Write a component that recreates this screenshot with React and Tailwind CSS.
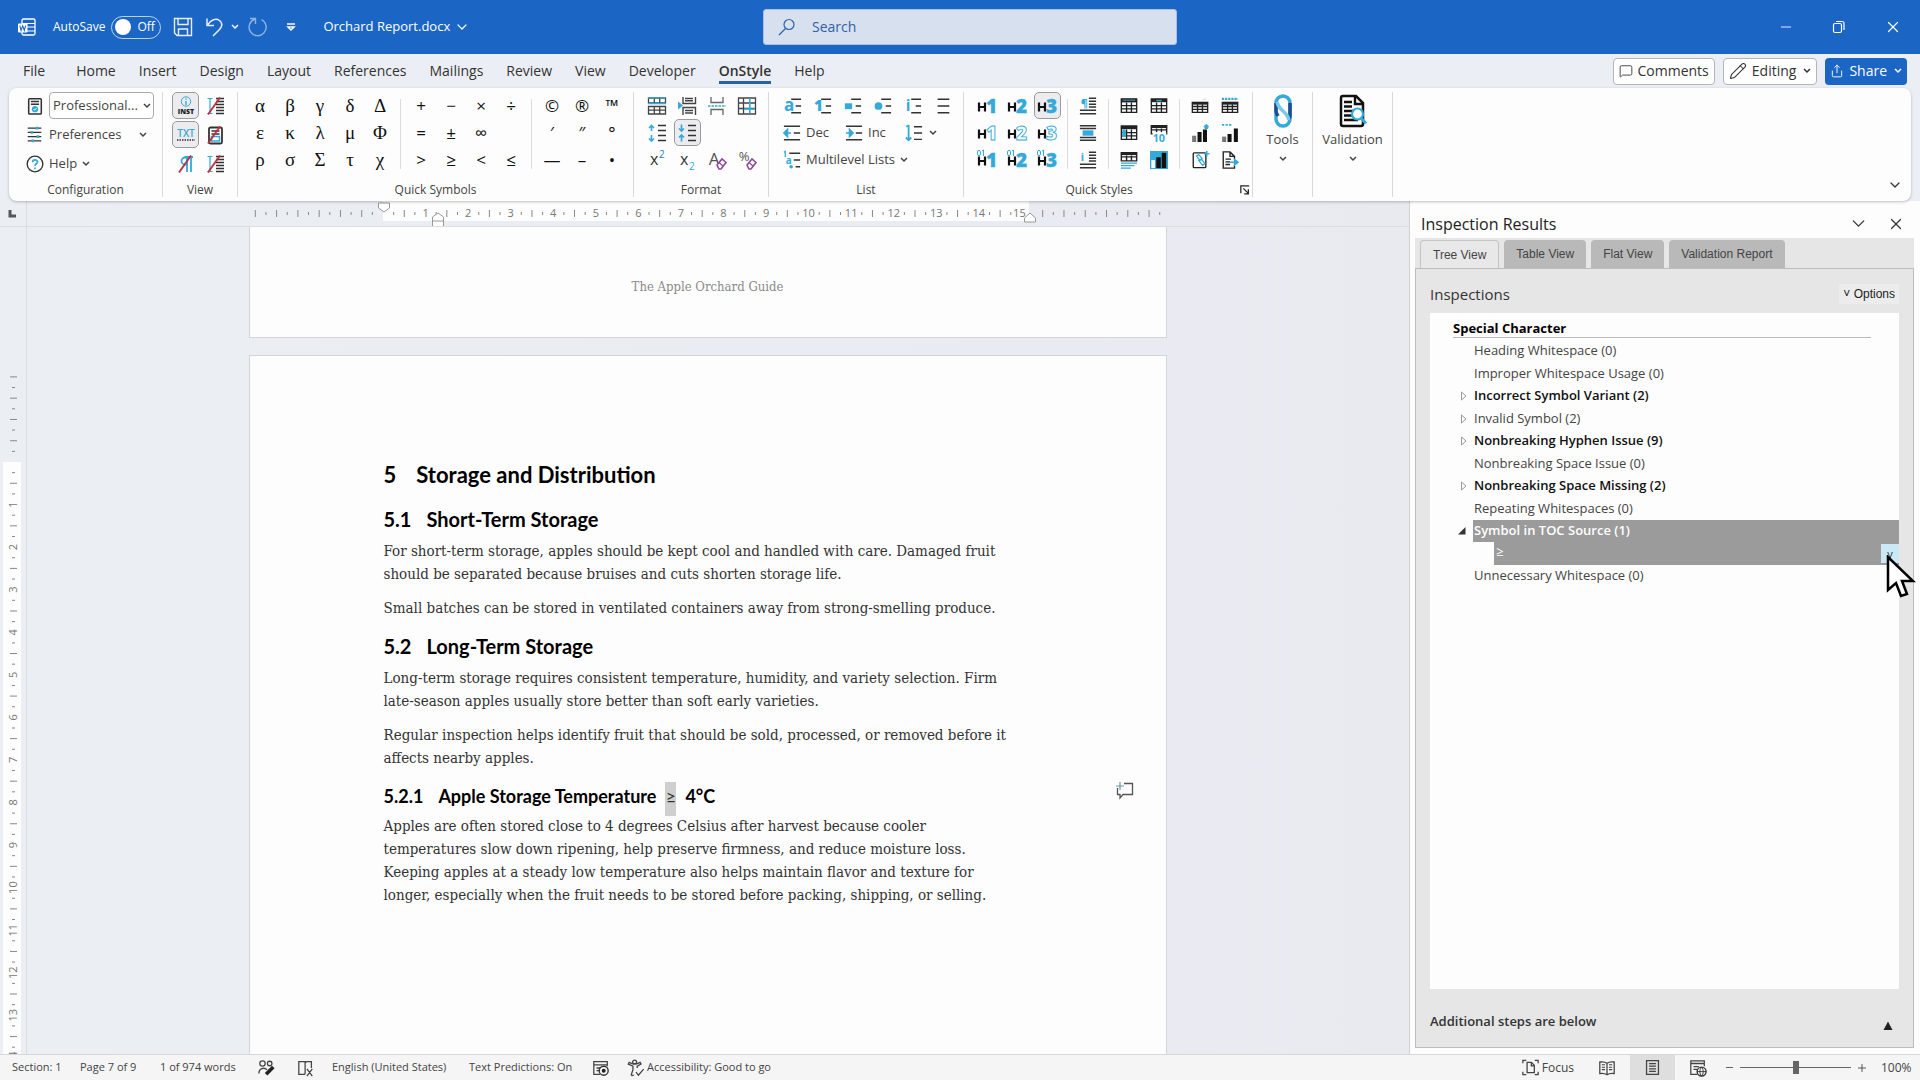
import {
  Search, ChevronDown, Minus, Plus, X, Copy, MessageSquare, Pencil, Share, Accessibility,
} from 'lucide-react';

const BLUE = '#35a9d8';
const INK = '#333';

const tabs = ['File', 'Home', 'Insert', 'Design', 'Layout', 'References', 'Mailings', 'Review', 'View', 'Developer', 'OnStyle', 'Help'];

const greek = ['α', 'β', 'γ', 'δ', 'Δ', 'ε', 'κ', 'λ', 'μ', 'Φ', 'ρ', 'σ', 'Σ', 'τ', 'χ'];
const operators = ['+', '−', '×', '÷', '=', '±', '∞', '', '>', '≥', '<', '≤'];
const marks = ['©', '®', '™', '′', '″', '°', '—', '–', '•'];

const inspections = [
  { label: 'Heading Whitespace (0)' },
  { label: 'Improper Whitespace Usage (0)' },
  { label: 'Incorrect Symbol Variant (2)', bold: true, closed: true },
  { label: 'Invalid Symbol (2)', closed: true },
  { label: 'Nonbreaking Hyphen Issue (9)', bold: true, closed: true },
  { label: 'Nonbreaking Space Issue (0)' },
  { label: 'Nonbreaking Space Missing (2)', bold: true, closed: true },
  { label: 'Repeating Whitespaces (0)' },
];

function Glyph({ children, size = 20, box = 20 }) {
  return (
    <svg width={size} height={size} viewBox={`0 0 ${box} ${box}`} fill="none" className="shrink-0 overflow-visible" aria-hidden>
      {children}
    </svg>
  );
}

function Down() {
  return (
    <svg width="8" height="6" viewBox="0 0 8 6" fill="none" className="shrink-0" aria-hidden>
      <path d="M1 1l3 3 3-3" stroke="currentColor" strokeWidth="1.5" />
    </svg>
  );
}

function IconButton({ label, active, children }) {
  return (
    <button
      type="button"
      aria-label={label}
      className={`flex h-[27px] w-[27px] shrink-0 items-center justify-center justify-self-center rounded-[5px] border ${
        active ? 'border-[#9a9a9a] bg-[#ececee]' : 'border-transparent'
      }`}
    >
      {children}
    </button>
  );
}

function Divider() {
  return <div className="mx-[5px] mt-[7px] h-[70px] w-px shrink-0 bg-[#dcdcdc]" />;
}

function Group({ title, className = '', inner = '', children, extra }) {
  return (
    <section className={`relative flex shrink-0 flex-col border-r border-[#d9d9d9] ${className}`}>
      <div className={`flex flex-1 ${inner}`}>{children}</div>
      {title && <h2 className="h-[14px] text-center text-xs leading-[14px] text-[#444]">{title}</h2>}
      {extra}
    </section>
  );
}

/* ---------- icons ---------- */

function WordIcon() {
  return (
    <Glyph>
      <rect x="5" y="2" width="13" height="16" rx="1.5" stroke="#fff" strokeWidth="1.3" />
      <path d="M5 6.5h13M10 10h8M10 14h8" stroke="#fff" strokeWidth="1.2" />
      <rect x="1" y="6.5" width="9.5" height="9" rx="1" fill="#fff" />
      <path d="M2.8 8.6l1.3 4.8 1.6-4.6 1.6 4.6 1.3-4.8" stroke="#1b65c4" strokeWidth="1.1" />
    </Glyph>
  );
}

function SaveIcon() {
  return (
    <Glyph>
      <path d="M1.5 1.5h17v17H4l-2.500-2.500zM5 1.500v6h10v-6M5.500 18.500v-6.500h9v6.500" stroke="#e8effa" strokeWidth="1.400" />
    </Glyph>
  );
}

function UndoIcon() {
  return (
    <Glyph>
      <path d="M2 1.500v7h7M2.500 8C6 2.500 11 .8 14.500 3.500c4 3.200 2 7 0 9L8 19" stroke="#e8effa" strokeWidth="1.500" />
    </Glyph>
  );
}

function RepeatIcon() {
  return (
    <Glyph>
      <path d="M2 1.500h5.500V7M13.500 2.600A8.500 8.500 0 117.300 2" stroke="#8fb2e3" strokeWidth="1.400" />
    </Glyph>
  );
}

function ProfileIcon() {
  return (
    <Glyph size={18}>
      <rect x="3" y="2" width="14" height="17" rx="1" stroke={INK} strokeWidth="1.700" />
      <path d="M5.500 5h9M5.500 8h9" stroke={INK} strokeWidth="1.600" />
      <circle cx="10" cy="13.500" r="3.500" fill={BLUE} />
      <path d="M8.500 13.500l1.100 1.200 2-2.300" stroke="#fff" strokeWidth="1" />
    </Glyph>
  );
}

function SlidersIcon() {
  return (
    <Glyph size={17}>
      <path d="M2 2.500h16M2 7.500h16M2 12.500h16M2 17.500h16" stroke={INK} strokeWidth="1.500" />
      <path d="M13 1v3M7 6v3M14 11v3M8 16v3" stroke={BLUE} strokeWidth="3" />
    </Glyph>
  );
}

function HelpIcon() {
  return (
    <Glyph size={18}>
      <circle cx="10" cy="10" r="8.700" stroke={INK} strokeWidth="1.500" />
      <path d="M7.300 8c0-3.600 5.600-3.400 5.400-.2-.1 2-2.700 2-2.700 4.500M10 13.800v2" stroke={BLUE} strokeWidth="1.900" />
    </Glyph>
  );
}

function InstIcon() {
  return (
    <Glyph size={22} box={22}>
      <circle cx="11" cy="6.500" r="4.700" stroke={BLUE} strokeWidth="1" />
      <path d="M11 3.500v1.200M11 6v4" stroke={BLUE} strokeWidth="1.400" />
      <text x="11" y="19" textAnchor="middle" fontSize="7" fontWeight="800" fill="#222">INST</text>
    </Glyph>
  );
}

function TxtIcon() {
  return (
    <Glyph size={22} box={22}>
      <text x="11" y="13" textAnchor="middle" fontSize="10" fontWeight="600" fill={BLUE}>TXT</text>
      <path d="M2 16h18" stroke="#333" strokeWidth="1.600" strokeDasharray="1.500 1" />
    </Glyph>
  );
}

function OffIcon({ kind }) {
  return (
    <Glyph>
      {kind === 'lines' && (
        <>
          <path d="M11 2.500h8M11 5.500h8M11 8.500h8M11 11.500h8M11 14.500h8M11 17.500h8" stroke={INK} strokeWidth="1.700" />
          <path d="M5 3v14M7.500 2.500h-5M7.500 17.500h-5" stroke={BLUE} strokeWidth="1.200" />
        </>
      )}
      {kind === 'page' && (
        <>
          <rect x="4" y="2.500" width="13" height="16" rx="1.500" fill="#fff" stroke={INK} strokeWidth="1.800" />
          <path d="M6.500 6h8M6.500 9h8" stroke={INK} strokeWidth="1.600" />
          <rect x="6.500" y="11.500" width="8" height="4.500" stroke={BLUE} strokeWidth="1.500" />
        </>
      )}
      {kind === 'pilcrow' && (
        <>
          <path d="M11 3v15M15 3v15M17 3H8.500" stroke={BLUE} strokeWidth="1.800" />
          <path d="M9 3.500a3.500 3.500 0 000 7h2V3z" stroke={BLUE} strokeWidth="1.800" />
        </>
      )}
      <path d="M3 18.500L15 1.500" stroke="#c0303f" strokeWidth="1.900" />
    </Glyph>
  );
}

function FormatIcon({ kind }) {
  switch (kind) {
    case 'rows':
      return (
        <Glyph>
          <path d="M1.500 2h17v5h-17zM7.300 2v5M12.700 2v5M1.500 10.500h17V18h-17zM1.500 14.200h17M7.300 10.500V18M12.700 10.500V18" stroke="#444" strokeWidth="1.300" />
          <path d="M1 1.800h18M1 7.500h18" stroke={BLUE} strokeWidth="1.300" />
        </Glyph>
      );
    case 'breakBefore':
      return (
        <Glyph>
          <path d="M6 1v6.500h12.500V1M8 2.500h8M8 4.800h8M6 19v-7.500h12.500V19M8 14.500h8M8 17h8" stroke="#444" strokeWidth="1.400" />
          <path d="M1 5.500v8l5-4z" fill={BLUE} />
        </Glyph>
      );
    case 'break':
      return (
        <Glyph>
          <path d="M4 1v5.500h12V1M4 19v-5.500h12V19" stroke="#666" strokeWidth="1.300" />
          <path d="M1 10h18" stroke={BLUE} strokeWidth="1.400" strokeDasharray="2.500 1" />
        </Glyph>
      );
    case 'grid':
      return (
        <Glyph>
          <path d="M1.500 2h17v16h-17zM6.500 2v16M1.500 7h17M1.500 12.500h17" stroke="#444" strokeWidth="1.300" />
          <path d="M7 13h11M12.800 2.500v15" stroke={BLUE} strokeWidth="1.600" />
        </Glyph>
      );
    case 'spaceOut':
      return (
        <Glyph>
          <path d="M11 2.500h8M11 7.500h8M11 12.500h8M11 17.500h8" stroke={INK} strokeWidth="1.400" />
          <path d="M4.500 8V2.500M2 5l2.500-2.500L7 5M4.500 12v6M2 15.500L4.500 18 7 15.500" stroke={BLUE} strokeWidth="1.600" />
        </Glyph>
      );
    default:
      return (
        <Glyph>
          <path d="M11 2.500h8M11 7.500h8M11 12.500h8M11 17.500h8" stroke={INK} strokeWidth="1.400" />
          <path d="M4.500 1.500V8M2 5.500L4.500 8 7 5.500M4.500 18.500V12M2 14.500L4.500 12 7 14.500" stroke={BLUE} strokeWidth="1.700" />
        </Glyph>
      );
  }
}

function ScriptIcon({ raised }) {
  return (
    <Glyph size={20} box={20}>
      <text x="3" y="15" fontSize="16" fill="#333">x</text>
      <text x="12" y={raised ? 8 : 20} fontSize="10" fill={raised ? '#2f7fb5' : BLUE}>2</text>
    </Glyph>
  );
}

function EraserIcon({ char }) {
  return (
    <Glyph size={22} box={22}>
      <text x="8" y={char === 'A' ? 16 : 12} textAnchor="middle" fontSize={char === 'A' ? 17 : 13} fill="#555">{char}</text>
      <path d="M11 16l5-6 4 3.500-5 6.500h-2z" fill="#fff" stroke="#8d4a98" strokeWidth="1.600" />
      <path d="M13 13.500l4 3.500" stroke="#8d4a98" strokeWidth="1.200" />
    </Glyph>
  );
}

function ListIcon({ kind }) {
  return (
    <Glyph size={18}>
      <path
        d={kind === 'none' ? 'M4 2.500h13M4 10h13M4 17.500h13' : 'M8 2.500h11M13 10h6M8 17.500h11'}
        stroke={INK}
        strokeWidth="1.600"
      />
      {kind === 'a' && <text x="0" y="15" fontSize="19" fontWeight="700" fill={BLUE}>a</text>}
      {kind === '1' && <text x="0" y="16" fontSize="17" fontWeight="800" fill={BLUE}>1</text>}
      {kind === 'i' && <text x="2" y="16" fontSize="17" fontWeight="700" fill={BLUE}>i</text>}
      {kind === 'square' && <rect x="1" y="7" width="8" height="6.500" fill={BLUE} />}
      {kind === 'dot' && <circle cx="5" cy="10" r="4.300" fill={BLUE} />}
    </Glyph>
  );
}

function IndentIcon({ inward }) {
  return (
    <Glyph size={18}>
      <path d="M1 2.500h18M12 10h7M1 17.500h18" stroke={INK} strokeWidth="1.600" />
      <path d={inward ? 'M1 10h5M5 6v8l4-4z' : 'M9 10H4M5 6v8l-4-4z'} fill={BLUE} stroke={BLUE} strokeWidth="1.800" />
    </Glyph>
  );
}

function OrderIcon() {
  return (
    <Glyph size={18}>
      <path d="M10 3h9M10 10h9M10 17h9" stroke={INK} strokeWidth="1.500" />
      <path d="M4 1v17M1.500 3L4 1.500M1 15l3 3 3-3" stroke={BLUE} strokeWidth="2" />
    </Glyph>
  );
}

function MultilevelIcon() {
  return (
    <Glyph size={18}>
      <path d="M7 2.500h12M12 10h7M14 17.500h5" stroke={INK} strokeWidth="1.600" />
      <path d="M1 1.500l1.500-1V7" stroke={BLUE} strokeWidth="1.400" />
      <text x="3" y="14" fontSize="11" fontWeight="700" fill={BLUE}>a</text>
      <circle cx="9" cy="17.500" r="2" fill={BLUE} />
    </Glyph>
  );
}

function HeadingIcon({ n, kind }) {
  return (
    <Glyph size={22} box={22}>
      {kind === 'numbered' && (
        <g stroke={BLUE} strokeWidth="1">
          <ellipse cx="3" cy="4" rx="1.600" ry="2.800" />
          <path d="M6 2l1.500-1v6" />
        </g>
      )}
      <path d="M3 7.500v9M9 7.500v9M3 12h6" stroke="#111" strokeWidth="2.200" />
      <text
        x="10"
        y="18"
        fontSize="19"
        fontWeight="800"
        fill={kind === 'outline' ? '#fff' : BLUE}
        stroke={BLUE}
        strokeWidth={kind === 'outline' ? 0.9 : 0.3}
      >
        {n}
      </text>
    </Glyph>
  );
}

function ParaIcon({ kind }) {
  return (
    <Glyph size={18}>
      {kind === 'band' ? (
        <>
          <path d="M1 2h18M1 5h18M1 15h18M1 18h18" stroke={INK} strokeWidth="1.600" />
          <rect x="4" y="7" width="12" height="6" fill={BLUE} />
        </>
      ) : (
        <>
          <path d="M11 1.500h8M11 4.700h8M11 8h8M11 11.200h8M1 14.800h18M1 18.500h18" stroke={INK} strokeWidth="1.700" />
          <text x="2" y="11" fontSize="12" fontWeight="700" fill={BLUE}>{kind}</text>
        </>
      )}
    </Glyph>
  );
}

function TableGlyph({ kind }) {
  const plain = 'M1.500 2h17v15h-17zM1.500 9.500h17M1.500 13.200h17M7.300 6v11M12.700 6v11';
  const short = 'M1.500 2h17v9h-17zM1.500 6.500h17M7.300 5v6M12.700 5v6';
  const low = 'M1.500 6h17v11h-17zM1.500 10.500h17M1.500 13.800h17M7.300 8v9M12.700 8v9';
  return (
    <Glyph size={18}>
      {kind === 'top' && <><path d={plain} stroke="#222" strokeWidth="1.500" /><path d="M1 4h18" stroke="#222" strokeWidth="4" /><path d="M3 3.500h14" stroke={BLUE} strokeWidth="1" /></>}
      {kind === 'mid' && <><path d={plain} stroke="#222" strokeWidth="1.500" /><path d="M1 4h18" stroke="#222" strokeWidth="3.500" /><path d="M7 4h6" stroke={BLUE} strokeWidth="1.500" /></>}
      {kind === 'side' && <><path d={plain} stroke="#222" strokeWidth="1.500" /><path d="M1 4h18" stroke="#222" strokeWidth="3.500" /><rect x="2.500" y="6" width="4" height="8" fill={BLUE} /></>}
      {kind === 'ten' && <><path d={short} stroke="#222" strokeWidth="1.600" /><path d="M1 3h18" stroke="#222" strokeWidth="3" /><rect x="3" y="9" width="15" height="11" fill="#fdfdfd" /><text x="3" y="20" fontSize="12" fontWeight="700" fill={BLUE}>10</text></>}
      {kind === 'note' && <><path d={short} stroke="#222" strokeWidth="1.600" /><path d="M1 3h18" stroke="#222" strokeWidth="3" /><path d="M1 13.500h18M1 16.300h15M1 19h11" stroke={BLUE} strokeWidth="1.400" /></>}
      {kind === 'chart' && <><rect x="0" y="0" width="20" height="20" fill={BLUE} /><rect x="1.500" y="10" width="4" height="9" fill="#fff" /><rect x="7" y="7" width="5" height="12" fill="#111" /><rect x="13" y="2" width="5" height="17" fill="#111" /></>}
      {kind === 'low' && <><path d={low} stroke="#222" strokeWidth="1.500" /><path d="M1 7h18" stroke="#222" strokeWidth="3" /><path d="M13 3l4-1" stroke="#b5dcee" /></>}
      {kind === 'caption' && <><path d={low} stroke="#222" strokeWidth="1.500" /><path d="M1 7h18" stroke="#222" strokeWidth="3" /><path d="M1 2h18" stroke={BLUE} strokeWidth="2.500" strokeDasharray="2.500 1" /></>}
      {kind === 'bars' && <><path d="M3.500 13v7" stroke="#777" strokeWidth="4.500" /><path d="M9.500 9v11M15.500 6v14" stroke="#111" strokeWidth="4.500" /><path d="M17 0v6M14 3h6M15 1l4 4M19 1l-4 4" stroke={BLUE} strokeWidth="1.200" /></>}
      {kind === 'figure' && <><path d="M3.500 14v6" stroke="#777" strokeWidth="4.500" /><path d="M9.500 11v9M16.500 5v15" stroke="#111" strokeWidth="4.500" /><path d="M1 1h12" stroke={BLUE} strokeWidth="2" strokeDasharray="2.500 1.500" /></>}
      {kind === 'link' && <><rect x="2.500" y="2" width="14" height="16.500" rx="1" stroke="#222" strokeWidth="1.500" /><path d="M6 5.500l2.500-1.500 4 4.500-2.500 2zM8.500 10.500l3-1.500 4 5-2.500 2z" stroke={BLUE} strokeWidth="1.400" /><path d="M17.500 0v6M14.500 3h6" stroke={BLUE} strokeWidth="1.700" /></>}
      {kind === 'export' && <><path d="M15 9V6l-5-5H2.500v18H15v-3M10 1v5h5M5 9h6M5 12h5M5 15h5" stroke="#222" strokeWidth="1.500" /><path d="M10 12.500h5M15 9.500v6l4-3z" fill={BLUE} stroke={BLUE} strokeWidth="1.600" /></>}
    </Glyph>
  );
}

function ToolsIcon() {
  return (
    <svg width="22" height="34" viewBox="0 0 22 34" fill="none" aria-hidden>
      <rect x="4" y="2" width="14" height="30" rx="7" stroke={BLUE} strokeWidth="3.500" />
      <path d="M4 9v8c0 2 1 3 2 5M18 9v12c0 1 0 3-1 4" stroke="#1d4e89" strokeWidth="3.500" />
      <path d="M5 8c2 9 10 9 12 18" stroke="#7cc8ea" strokeWidth="3.500" />
    </svg>
  );
}

function ValidationIcon() {
  return (
    <svg width="30" height="34" viewBox="0 0 30 34" fill="none" aria-hidden>
      <path d="M18 2H5a2 2 0 00-2 2v26a2 2 0 002 2h18a2 2 0 002-2V9z" stroke="#111" strokeWidth="2.500" />
      <path d="M17 2v8h8M6 8h8M6 12.500h8M6 17h10M6 21.500h9M6 26h14" stroke="#111" strokeWidth="2.400" />
      <circle cx="19.500" cy="20" r="5.500" fill="#fff" stroke={BLUE} strokeWidth="2.200" />
      <path d="M23.500 24.500l4.500 5" stroke={BLUE} strokeWidth="3" />
    </svg>
  );
}

/* ---------- chrome ---------- */

function TitleBar() {
  return (
    <header className="flex h-[54px] shrink-0 items-center bg-[#1b65c4] text-white">
      <div className="flex flex-1 basis-0 items-center pl-[17px]">
        <WordIcon />
        <label className="ml-4 flex items-center gap-[6px] text-xs">
          AutoSave
          <input type="checkbox" className="sr-only" />
          <span className="flex h-[23px] w-[50px] items-center gap-[6px] rounded-full border border-white/70 pl-[3px] text-xs">
            <span className="h-4 w-4 rounded-full bg-white" />
            Off
          </span>
        </label>
        <button type="button" aria-label="Save" className="ml-3"><SaveIcon /></button>
        <button type="button" aria-label="Undo" className="ml-3 flex items-center gap-[6px]"><UndoIcon /><Down /></button>
        <button type="button" aria-label="Repeat" className="ml-[9px]"><RepeatIcon /></button>
        <button type="button" aria-label="Customize toolbar" className="ml-4">
          <Glyph size={14} box={14}><path d="M3 4h8M4 7l3 3 3-3z" stroke="#fff" strokeWidth="1.500" /></Glyph>
        </button>
        <button type="button" className="ml-[25px] flex items-center gap-1 text-[13px]">Orchard Report.docx<ChevronDown size={16} strokeWidth={1.800} /></button>
      </div>
      <label className="ml-[21px] flex h-[36px] w-[414px] items-center gap-4 rounded-[3px] border border-[#a9c0e2] bg-[#d7e0ef] px-[14px] text-[#2f62a3]">
        <Glyph size={18} box={18}>
          <circle cx="11" cy="6.500" r="5" stroke="#2f62a3" strokeWidth="1.200" /><path d="M7.500 10.500L1 17" stroke="#2f62a3" strokeWidth="1.200" />
        </Glyph>
        <input type="search" aria-label="Search" placeholder="Search" className="w-full bg-transparent text-sm outline-none placeholder:text-[#2f62a3]" />
      </label>
      <div className="flex flex-1 basis-0 items-center justify-end gap-[38px] pr-[18px]">
        <button type="button" aria-label="Minimize"><Minus size={16} strokeWidth={1.300} /></button>
        <button type="button" aria-label="Restore">
          <Glyph size={14} box={14}><rect x="1.500" y="3.500" width="8" height="9" rx="1.500" stroke="#fff" strokeWidth="1.200" /><path d="M4 1.500h6a2 2 0 012 2V10" stroke="#fff" strokeWidth="1.200" /></Glyph>
        </button>
        <button type="button" aria-label="Close"><X size={18} strokeWidth={1.600} /></button>
      </div>
    </header>
  );
}

function TabRow() {
  return (
    <nav className="flex h-[34px] shrink-0 items-center justify-between bg-[#ebeff5] pr-[13px] pl-[12px]">
      <div className="flex gap-px pt-[3px]">
        {tabs.map((tab) => (
          <button
            key={tab}
            type="button"
            className={`flex justify-center px-[11px] text-sm leading-5 text-[#333] ${tab === 'File' ? 'mr-[8px]' : ''}`}
          >
            <span className={tab === 'OnStyle' ? 'border-b-[3px] border-[#2b5fa8] font-semibold' : 'border-b-[3px] border-transparent'}>{tab}</span>
          </button>
        ))}
      </div>
      <div className="flex gap-2 text-sm text-[#333]">
        <button type="button" className="flex h-[27px] items-center gap-[5px] rounded-[4px] border border-[#b5b5b5] bg-white px-[5px]">
          <MessageSquare size={14} strokeWidth={1.500} />Comments
        </button>
        <button type="button" className="flex h-[27px] items-center gap-[5px] rounded-[4px] border border-[#b5b5b5] bg-white px-[5px]">
          <Pencil size={18} strokeWidth={1.400} />Editing<span className="ml-[2px]"><Down /></span>
        </button>
        <button type="button" className="flex h-[27px] items-center gap-[5px] rounded-[4px] bg-[#1b65c4] px-[5px] text-white">
          <Share size={14} strokeWidth={1.600} />Share<span className="ml-[2px]"><Down /></span>
        </button>
      </div>
    </nav>
  );
}

function SymbolGrid({ items, columns, font }) {
  return (
    <div className={`grid auto-rows-[27px] ${columns}`}>
      {items.map((s, i) => (
        <button key={i} type="button" className={`leading-[27px] text-[#111] ${font}`}>{s}</button>
      ))}
    </div>
  );
}

function Ribbon() {
  return (
    <div className="shrink-0 bg-[#ebeff5] px-[9px]">
      <div className="relative z-10 flex h-[113px] rounded-lg bg-[#fdfdfd] pt-[4px] pb-[4px] shadow-[0_1px_3px_rgba(0,0,0,0.25)]">
        <Group title="Configuration" className="w-[154px]" inner="pl-[17px]">
          <div className="flex flex-col gap-[2px] text-[13px] text-[#444]">
            <div className="flex h-[27px] items-center gap-[5px]">
              <ProfileIcon />
              <div className="relative">
                <select aria-label="Profile" className="h-[27px] w-[105px] appearance-none rounded-[4px] border border-[#aaa] bg-white pl-[3px] text-[13px] text-[#444]">
                  <option>Professional...</option>
                </select>
                <span className="pointer-events-none absolute top-[11px] right-[3px]"><Down /></span>
              </div>
            </div>
            <button type="button" className="flex h-[27px] items-center gap-[6px]">
              <SlidersIcon />Preferences<span className="ml-[12px]"><Down /></span>
            </button>
            <button type="button" className="flex h-[27px] items-center gap-[5px]">
              <HelpIcon />Help<Down />
            </button>
          </div>
        </Group>

        <Group title="View" className="w-[75px]" inner="px-[8px]">
          <div className="grid flex-1 grid-cols-[29px_29px] auto-rows-[29px]">
            <IconButton label="Instances" active><InstIcon /></IconButton>
            <IconButton label="Hide lines"><OffIcon kind="lines" /></IconButton>
            <IconButton label="Text marks" active><TxtIcon /></IconButton>
            <IconButton label="Hide page"><OffIcon kind="page" /></IconButton>
            <IconButton label="Hide paragraph marks"><OffIcon kind="pilcrow" /></IconButton>
            <IconButton label="Hide list marks"><OffIcon kind="lines" /></IconButton>
          </div>
        </Group>

        <Group title="Quick Symbols" className="w-[396px]" inner="pl-[7px]">
          <SymbolGrid items={greek} columns="grid-cols-[repeat(5,30px)]" font="font-['Liberation_Serif',serif] text-[19px]" />
          <Divider />
          <SymbolGrid items={operators} columns="grid-cols-[repeat(4,30px)]" font="text-[17px]" />
          <Divider />
          <SymbolGrid items={marks} columns="grid-cols-[repeat(3,30px)]" font="text-[17px]" />
        </Group>

        <Group title="Format" className="w-[135px]" inner="pl-[8px]">
          <div className="grid grid-cols-[repeat(4,30px)] auto-rows-[27px]">
            <IconButton label="Repeat rows"><FormatIcon kind="rows" /></IconButton>
            <IconButton label="Page break before"><FormatIcon kind="breakBefore" /></IconButton>
            <IconButton label="Allow break"><FormatIcon kind="break" /></IconButton>
            <IconButton label="Table borders"><FormatIcon kind="grid" /></IconButton>
            <IconButton label="Increase spacing"><FormatIcon kind="spaceOut" /></IconButton>
            <IconButton label="Decrease spacing" active><FormatIcon kind="spaceIn" /></IconButton>
            <span />
            <span />
            <IconButton label="Superscript"><ScriptIcon raised /></IconButton>
            <IconButton label="Subscript"><ScriptIcon /></IconButton>
            <IconButton label="Clear formatting"><EraserIcon char="A" /></IconButton>
            <IconButton label="Clear scaling"><EraserIcon char="%" /></IconButton>
          </div>
        </Group>

        <Group title="List" className="w-[195px]" inner="pl-[9px]">
          <div className="flex flex-col text-[13px] text-[#444]">
            <div className="grid h-[27px] grid-cols-[repeat(6,30px)]">
              {['a', '1', 'square', 'dot', 'i', 'none'].map((k) => (
                <IconButton key={k} label={`List style ${k}`}><ListIcon kind={k} /></IconButton>
              ))}
            </div>
            <div className="flex h-[27px] items-center pl-[5px]">
              <button type="button" className="flex w-[62px] items-center gap-[5px]"><IndentIcon />Dec</button>
              <button type="button" className="flex w-[60px] items-center gap-[5px]"><IndentIcon inward />Inc</button>
              <button type="button" aria-label="Numbering order" className="flex items-center gap-[6px]"><OrderIcon /><Down /></button>
            </div>
            <button type="button" className="flex h-[27px] items-center gap-[5px] pl-[5px]"><MultilevelIcon />Multilevel Lists<Down /></button>
          </div>
        </Group>

        <Group
          title="Quick Styles"
          className="w-[289px] pr-[18px]"
          inner="pl-[8px]"
          extra={
            <button type="button" aria-label="Quick Styles settings" className="absolute right-[2px] bottom-[2px]">
              <Glyph size={10} box={12}><path d="M1 10V1h10M4 4l6 6M10 5v5.500H5" stroke="#222" strokeWidth="1.500" /></Glyph>
            </button>
          }
        >
          <div className="grid shrink-0 grid-cols-[repeat(3,30px)] auto-rows-[27px]">
            {['solid', 'outline', 'numbered'].map((kind) =>
              [1, 2, 3].map((n) => (
                <IconButton key={kind + n} label={`Heading ${n} ${kind}`} active={kind === 'solid' && n === 3}><HeadingIcon n={n} kind={kind} /></IconButton>
              ))
            )}
          </div>
          <Divider />
          <div className="grid shrink-0 grid-cols-[30px] auto-rows-[27px]">
            {['¶', 'band', 'i'].map((k) => <IconButton key={k} label={`Paragraph ${k}`}><ParaIcon kind={k} /></IconButton>)}
          </div>
          <Divider />
          <div className="grid shrink-0 grid-cols-[repeat(2,30px)] auto-rows-[27px]">
            {['top', 'mid', 'side', 'ten', 'note', 'chart'].map((k) => <IconButton key={k} label={`Table ${k}`}><TableGlyph kind={k} /></IconButton>)}
          </div>
          <Divider />
          <div className="grid shrink-0 grid-cols-[repeat(2,30px)] auto-rows-[27px]">
            {['low', 'caption', 'bars', 'figure', 'link', 'export'].map((k) => <IconButton key={k} label={`Insert ${k}`}><TableGlyph kind={k} /></IconButton>)}
          </div>
        </Group>

        <Group className="w-[60px]">
          <button type="button" className="flex w-full flex-col items-center pt-[2px] text-[13px] text-[#444]">
            <ToolsIcon />
            <span className="mt-[2px] mb-[6px]">Tools</span>
            <Down />
          </button>
        </Group>
        <Group className="w-[80px]">
          <button type="button" className="flex w-full flex-col items-center pt-[2px] text-[13px] text-[#444]">
            <ValidationIcon />
            <span className="mt-[2px] mb-[6px]">Validation</span>
            <Down />
          </button>
        </Group>
        <button type="button" aria-label="Collapse ribbon" className="mr-[8px] mb-[4px] ml-auto self-end text-[#333]"><ChevronDown size={16} strokeWidth={1.900} /></button>
      </div>
    </div>
  );
}

/* ---------- rulers ---------- */

const QUARTER = 10.64;

function HorizontalRuler() {
  const origin = 134;
  const ticks = [];
  for (let q = -12; q <= 73; q += 1) {
    const x = origin + q * QUARTER;
    if (q > 0 && q <= 60 && q % 4 === 0) {
      ticks.push(<text key={q} x={x - (q === 60 ? 2 : 0)} y="16" textAnchor="middle" fontSize="11" fill="#777">{q / 4}</text>);
    } else if (q !== 0 && q !== 61) {
      const half = q % 2 === 0;
      ticks.push(<path key={q} d={half ? `M${x} 9v7` : `M${x} 11v3`} stroke="#888" />);
    }
  }
  return (
    <div className="flex h-[26px] shrink-0 justify-center border-b border-[#dcdde0] pr-[22px]">
      <svg width="917" height="25" fill="none" className="shrink-0" aria-hidden>
        <rect x={origin} y="0" width="646" height="20" fill="#fdfdfd" />
        {ticks}
        <path d="M129.500 2h11v5l-5.500 4-5.500-4z" fill="#fff" stroke="#999" />
        <path d="M183.500 25v-9l5.500-4 5.500 4v9M183.500 20h11" fill="#fff" stroke="#999" />
        <path d="M775.500 21v-4l5.500-5 5.500 5v4z" fill="#fff" stroke="#999" />
      </svg>
    </div>
  );
}

function VerticalRuler() {
  const origin = 235;
  const ticks = [];
  for (let q = -8; q <= 56; q += 1) {
    const y = origin + q * QUARTER;
    if (q > 0 && q % 4 === 0) {
      ticks.push(<text key={q} transform={`translate(17 ${y}) rotate(-90)`} textAnchor="middle" fontSize="11" fill="#777">{q / 4}</text>);
    } else if (q !== 0) {
      ticks.push(<path key={q} d={q % 2 === 0 ? `M10 ${y}h7` : `M12 ${y}h3`} stroke="#888" />);
    }
  }
  return (
    <div className="flex w-[27px] shrink-0 flex-col border-r border-[#dcdde0]">
      <div className="flex h-[26px] shrink-0 items-center border-b border-[#dcdde0] pl-[8px]">
        <Glyph size={9} box={9}><path d="M2 1v6h6" stroke="#555" strokeWidth="3" /></Glyph>
      </div>
      <svg width="26" className="min-h-0 flex-1" fill="none" aria-hidden>
        <rect x="3" y={origin} width="18" height="1000" fill="#fdfdfd" />
        {ticks}
      </svg>
    </div>
  );
}

/* ---------- document ---------- */

function Document() {
  return (
    <main className="flex min-w-0 flex-1 flex-col">
      <HorizontalRuler />
      <div className="flex min-h-0 flex-1 flex-col items-center overflow-hidden pr-[21px] font-['DejaVu_Serif_Condensed','DejaVu_Serif',serif]">
        <div className="flex h-[111px] w-[918px] shrink-0 items-center justify-center border border-t-0 border-[#d3d6d9] bg-[#fdfdfd] pt-[10px] text-[13px] text-[#8a8a8a]">
          The Apple Orchard Guide
        </div>
        <article className="relative mt-[17px] w-[918px] flex-1 border border-b-0 border-[#d3d6d9] bg-[#fdfdfd] pt-[103px] pl-[134px] text-[15px] leading-[23px] whitespace-nowrap text-[#333]">
          <h1 className="flex gap-[20px] font-['Lato',sans-serif] text-[22px] leading-[32px] font-bold text-black"><span>5</span>Storage and Distribution</h1>
          <h2 className="mt-[14px] flex gap-[15px] font-['Lato',sans-serif] text-[20px] leading-[28px] font-bold text-black"><span>5.1</span>Short-Term Storage</h2>
          <p className="mt-[7px]">For short-term storage, apples should be kept cool and handled with care. Damaged fruit<br />should be separated because bruises and cuts shorten storage life.</p>
          <p className="mt-[11px]">Small batches can be stored in ventilated containers away from strong-smelling produce.</p>
          <h2 className="mt-[12px] flex gap-[15px] font-['Lato',sans-serif] text-[20px] leading-[28px] font-bold text-black"><span>5.2</span>Long-Term Storage</h2>
          <p className="mt-[7px]">Long-term storage requires consistent temperature, humidity, and variety selection. Firm<br />late-season apples usually store better than soft early varieties.</p>
          <p className="mt-[11px]">Regular inspection helps identify fruit that should be sold, processed, or removed before it<br />affects nearby apples.</p>
          <h3 className="mt-[12px] flex font-['Lato',sans-serif] text-[18px] leading-[28px] font-bold text-black">
            <span className="mr-[15px]">5.2.1</span>Apple Storage Temperature
            <span className="mx-[9px] -mb-[8px] h-[34px] w-[11px] bg-[#cfcfcf] text-center font-normal text-[#333]">≥</span>4°C
          </h3>
          <p className="mt-[5px]">Apples are often stored close to 4 degrees Celsius after harvest because cooler<br />temperatures slow down ripening, help preserve firmness, and reduce moisture loss.<br />Keeping apples at a steady low temperature also helps maintain flavor and texture for<br />longer, especially when the fruit needs to be stored before packing, shipping, or selling.</p>
          <button type="button" aria-label="Add comment" className="absolute top-[425px] right-[32px]">
            <Glyph size={18} box={18}>
              <path d="M8 2.500h8.500v11H7l-3 3.500v-3.500H1.500V7" stroke="#555" strokeWidth="1.300" />
              <path d="M4 1v8M0 5h8" stroke="#6a9a9f" strokeWidth="1.200" />
            </Glyph>
          </button>
        </article>
      </div>
    </main>
  );
}

/* ---------- inspection pane ---------- */

const paneTabs = [
  { label: 'Tree View', active: true },
  { label: 'Table View' },
  { label: 'Flat View' },
  { label: 'Validation Report' },
];

function InspectionPane() {
  return (
    <aside className="flex w-[511px] shrink-0 flex-col border-l border-[#cfd1d4] bg-[#fdfdfd] pr-[6px] pb-[6px] pl-[5px]">
      <div className="flex h-[37px] shrink-0 items-center justify-between pt-[8px] pr-[9px] pl-[6px]">
        <h2 className="text-base font-medium text-[#222]">Inspection Results</h2>
        <div className="flex gap-[18px] text-[#333]">
          <button type="button" aria-label="Pane options"><ChevronDown size={21} strokeWidth={1.500} /></button>
          <button type="button" aria-label="Close pane"><X size={18} strokeWidth={1.600} /></button>
        </div>
      </div>
      <div role="tablist" className="flex h-[30px] shrink-0 items-end gap-[5px] bg-[#e6e6e6] pl-[5px] font-['Liberation_Sans',sans-serif] text-xs">
        {paneTabs.map(({ label, active }) => (
          <button
            key={label}
            type="button"
            role="tab"
            aria-selected={!!active}
            className={`h-[28px] rounded-t-[4px] px-[12px] text-[#444] ${active ? 'border border-b-0 border-[#c4c4c4] bg-[#e8e8e8]' : 'bg-[#b9b9b9]'}`}
          >
            {label}
          </button>
        ))}
      </div>
      <div className="flex min-h-0 flex-1 flex-col border border-[#bdbdbd] bg-[#e6e6e6] px-[14px]">
        <div className="flex h-[44px] shrink-0 items-center justify-between pt-[6px]">
          <h3 className="text-[15px] font-medium text-[#333]">Inspections</h3>
          <button type="button" className="h-[20px] bg-[#ececec] px-1 font-['Liberation_Sans',sans-serif] text-xs text-[#222]">˅ Options</button>
        </div>
        <div className="min-h-0 flex-1 bg-[#fdfdfd] pt-[6px] text-[13px] text-[#444]">
          <h4 className="mr-[28px] ml-[23px] border-b border-[#bbb] leading-[18px] font-bold text-black">Special Character</h4>
          <ul className="mt-[2px] grid h-[247px] auto-rows-fr">
            {inspections.map(({ label, bold, closed }) => (
              <li key={label} className="flex items-center pl-[30px]">
                <span className="flex w-[14px]">
                  {closed && <Glyph size={8} box={8}><path d="M1.500 0l4.500 4-4.500 4z" stroke="#999" /></Glyph>}
                </span>
                <span className={bold ? 'font-semibold text-[#111]' : ''}>{label}</span>
              </li>
            ))}
            <li className="flex items-center pl-[28px]">
              <span className="flex w-[15px]"><Glyph size={8} box={8}><path d="M7.500 0v7.500H0z" fill="#333" /></Glyph></span>
              <span className="flex h-full flex-1 items-center bg-[#9b9b9b] pl-px font-semibold text-white">Symbol in TOC Source (1)</span>
            </li>
            <li className="flex pl-[64px]">
              <span className="flex flex-1 items-center justify-between bg-[#9b9b9b] pl-[2px] text-white">
                <span className="pb-[3px]">≥</span>
                <span className="relative">
                  <button type="button" aria-label="Actions" className="flex h-[19px] w-[18px] items-center justify-center bg-[#cbe8f6] text-[11px] leading-[11px] text-[#333]">v</button>
                  <svg width="30" height="44" viewBox="0 0 30 44" className="pointer-events-none absolute top-[11px] left-[5px] z-20" aria-hidden>
                    <path d="M2 2v33l8-7 5 13 6-2-5-13h11z" fill="#fff" stroke="#000" strokeWidth="2.500" />
                  </svg>
                </span>
              </span>
            </li>
            <li className="flex items-center pl-[44px]">Unnecessary Whitespace (0)</li>
          </ul>
        </div>
        <div className="flex h-[58px] shrink-0 items-center justify-between pt-[7px] pr-[6px]">
          <span className="text-[13px] font-semibold text-[#333]">Additional steps are below</span>
          <button type="button" aria-label="Expand" className="pt-[8px]"><Glyph size={10} box={10}><path d="M5 0.500L9.500 9h-9z" fill="#222" /></Glyph></button>
        </div>
      </div>
    </aside>
  );
}

function StatusBar() {
  return (
    <footer className="flex h-[26px] shrink-0 items-center border-t border-[#d8d8d8] bg-[#f5f5f5] pr-[9px] pl-[12px] text-[11px] text-[#444]">
      <span className="w-[68px]">Section: 1</span>
      <span className="w-[80px]">Page 7 of 9</span>
      <span className="w-[98px]">1 of 974 words</span>
      <Glyph size={18}>
        <circle cx="5" cy="5" r="3" stroke="#444" strokeWidth="1.400" /><circle cx="13" cy="5" r="2.500" stroke="#444" strokeWidth="1.400" />
        <path d="M1 16c0-6 6-7 9-4" stroke="#444" strokeWidth="1.500" /><path d="M9 17l8-8" stroke="#222" strokeWidth="4" />
      </Glyph>
      <span className="ml-[21px]">
        <Glyph size={18}><path d="M9 17H2V3h7v14M9 4l2-1h5v7M11 11l6 8M17 11l-6 8" stroke="#444" strokeWidth="1.400" /></Glyph>
      </span>
      <span className="ml-[17px] w-[137px]">English (United States)</span>
      <span className="w-[123px]">Text Predictions: On</span>
      <Glyph size={18}>
        <path d="M9 17H2V3h15v5M2 6.500h15M5 10h4M5 13h3" stroke="#444" strokeWidth="1.400" />
        <circle cx="13" cy="13" r="5" stroke="#333" strokeWidth="1.500" /><circle cx="13" cy="13" r="2.200" fill="#222" />
      </Glyph>
      <button type="button" className="ml-[17px] flex items-center gap-[3px]">
        <Glyph size={17}>
          <circle cx="9" cy="3.500" r="2.300" stroke="#444" strokeWidth="1.500" />
          <path d="M8 19l-2 0.500-1-1 2-6V8.500L1.500 6 2.500 4l4 1.800h5L15.500 4l1 2L12 8.500v2M10.500 15.500l3 3.500 6-7" stroke="#444" strokeWidth="1.500" />
        </Glyph>
        Accessibility: Good to go
      </button>

      <div className="ml-auto flex h-full items-center">
        <button type="button" className="mr-[25px] flex items-center gap-[3px] text-xs">
          <Glyph size={17}>
            <path d="M1 5V1.500h4M15 1.500h4V5M1 15v3.500h4M15 18.500h4V15" stroke="#444" strokeWidth="1.500" />
            <path d="M6 4h5l3.500 3.500V16H6zM11 4v4h3.500" stroke="#444" strokeWidth="1.500" />
          </Glyph>
          Focus
        </button>
        <button type="button" aria-label="Read mode" className="mr-[15px]">
          <Glyph size={16}>
            <path d="M10 4C7 2 4 2 1 2.500V17c3-.5 6-.5 9 1.500 3-2 6-2 9-1.500V2.500C16 2 13 2 10 4zM10 4v14" stroke="#444" strokeWidth="1.600" />
            <path d="M3.500 6h4M3.500 9h4M3.500 12h4M12.500 6h4M12.500 9h4M12.500 12h4" stroke="#444" strokeWidth="1.400" />
          </Glyph>
        </button>
        <button type="button" aria-label="Print layout" className="flex h-full w-[45px] items-center justify-center bg-[#dedede]">
          <Glyph size={17}><path d="M3 2h14v16H3zM6 5.500h8M6 8.500h8M6 11.500h8M6 14.500h8" stroke="#444" strokeWidth="1.500" /></Glyph>
        </button>
        <button type="button" aria-label="Web layout" className="mr-[17px] ml-[14px]">
          <Glyph size={18}>
            <path d="M9 17H2V2h15v6M2 5h15M5 8.500h6M5 11.500h4" stroke="#444" strokeWidth="1.400" />
            <circle cx="14" cy="14" r="5" stroke="#333" strokeWidth="1.500" /><path d="M9 14h10M14 9c-2.500 3-2.500 7 0 10M14 9c2.500 3 2.500 7 0 10" stroke="#333" />
          </Glyph>
        </button>
        <button type="button" aria-label="Zoom out"><Minus size={11} strokeWidth={1.800} /></button>
        <div className="relative mx-[5px] flex h-[14px] w-[111px] items-center">
          <div className="h-px w-full bg-[#666]" />
          <div className="absolute left-[53px] h-[13px] w-[6px] bg-[#666]" />
          <input type="range" min="10" max="190" defaultValue="100" aria-label="Zoom" className="absolute inset-0 w-full opacity-0" />
        </div>
        <button type="button" aria-label="Zoom in"><Plus size={12} strokeWidth={1.800} /></button>
        <span className="ml-[13px] w-[30px] text-right text-xs">100%</span>
      </div>
    </footer>
  );
}

export default function App() {
  return (
    <div className="flex h-screen flex-col overflow-hidden bg-[#ebeff5] font-['Open_Sans','Noto_Sans',sans-serif]">
      <TitleBar />
      <TabRow />
      <Ribbon />
      <div className="flex min-h-0 flex-1 bg-linear-to-r from-[#ebeff4] to-[#e6e8ee]">
        <VerticalRuler />
        <Document />
        <InspectionPane />
      </div>
      <StatusBar />
    </div>
  );
}
